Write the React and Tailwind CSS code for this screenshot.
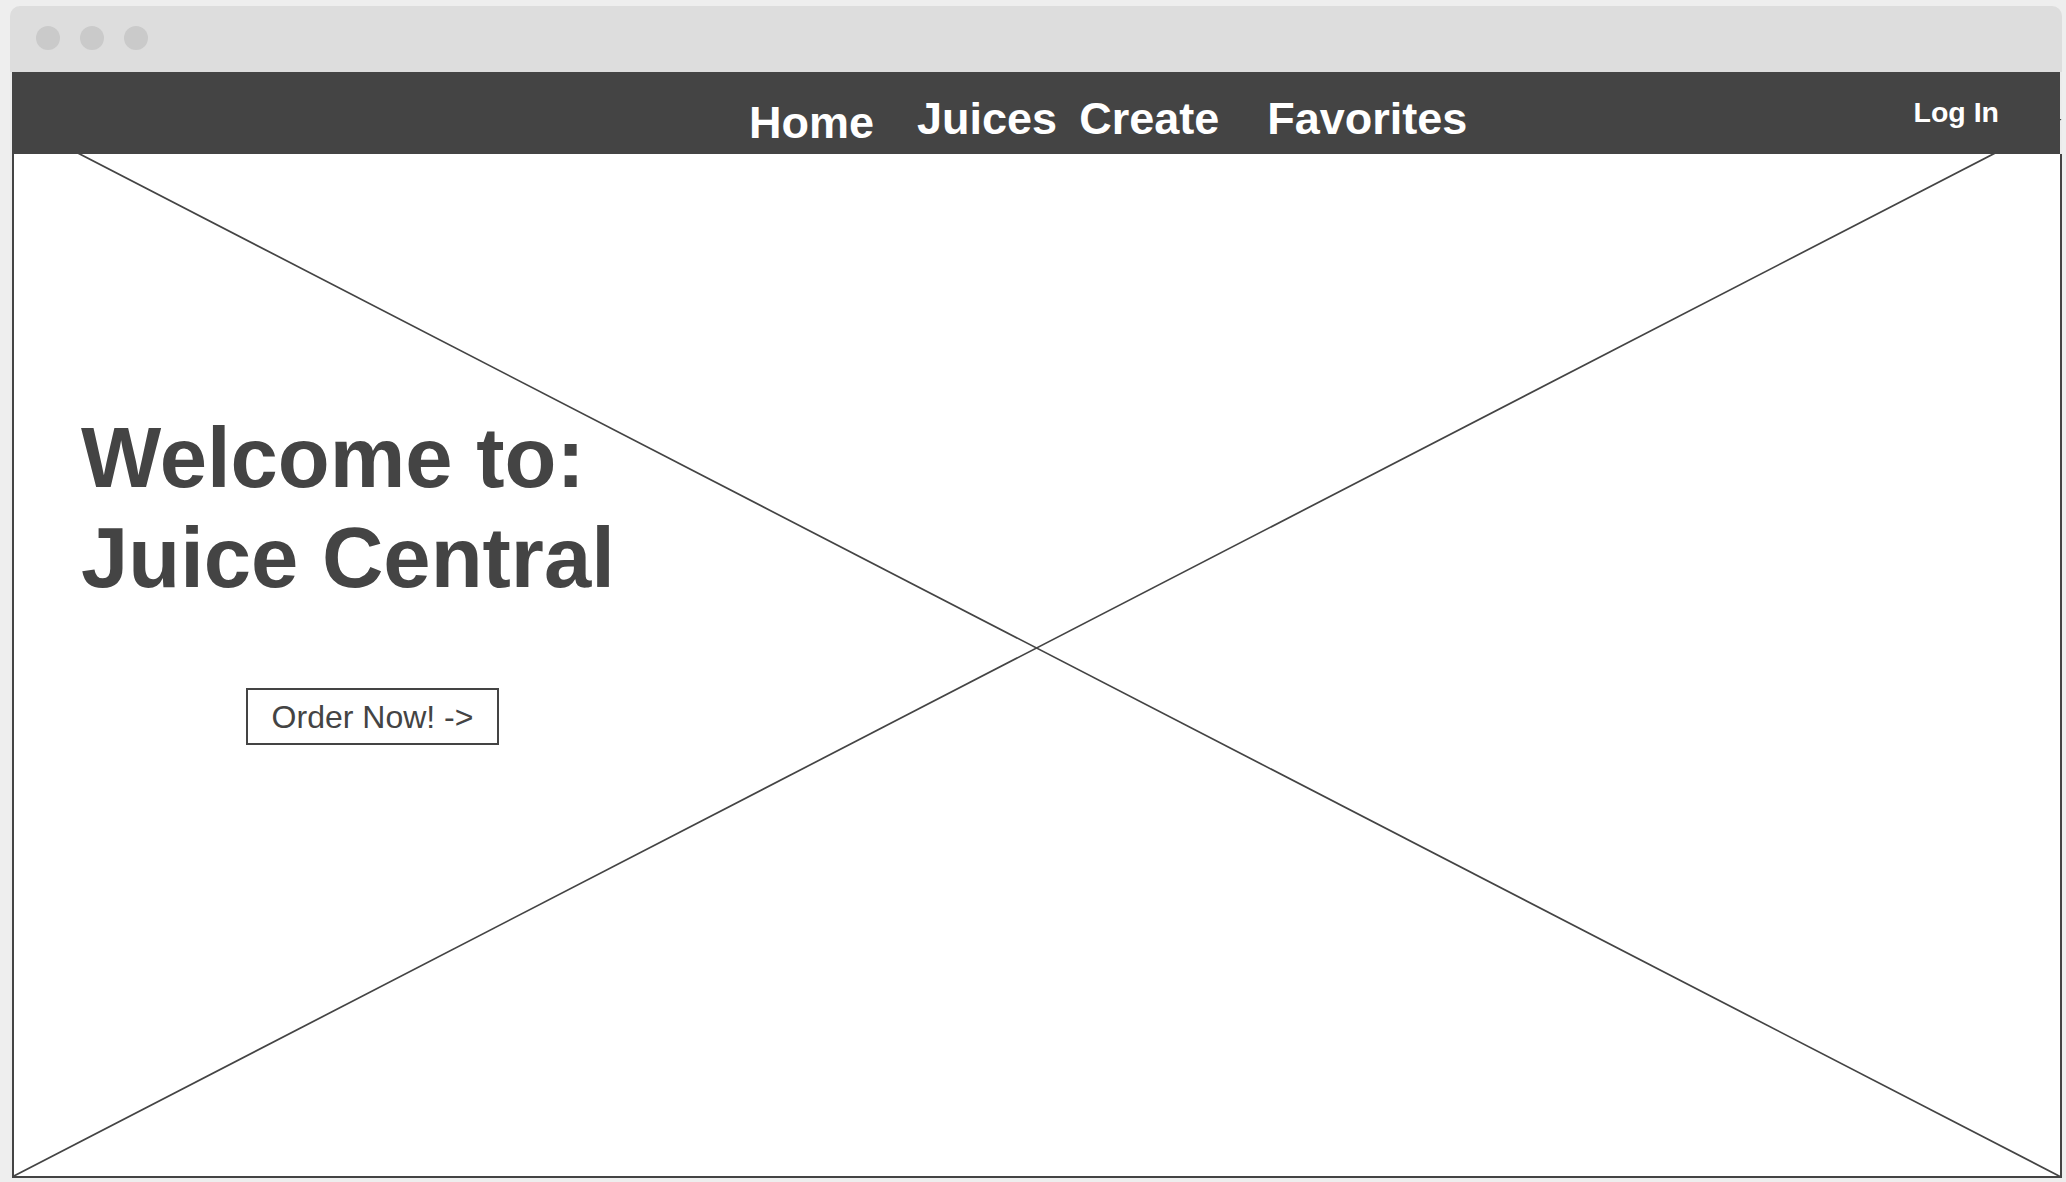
import React from "react";

const navItems = [
  { label: "Home", className: "ml-[737px] mt-[28px]" },
  { label: "Juices", className: "ml-[43px] mt-[24px]" },
  { label: "Create", className: "ml-[22px] mt-[24px]" },
  { label: "Favorites", className: "ml-[48px] mt-[24px]" },
];

const App = () => {
  return (
    <div className="w-[2066px] h-[1182px] overflow-hidden bg-[#eeeeee] pt-[6px] pl-[10px] font-['Liberation_Sans',Arial,sans-serif]">
      <div className="w-[2052px] rounded-t-[10px] bg-[#ebebeb]">
        {/* Browser title bar */}
        <div className="h-[66px] rounded-t-[10px] bg-[#dddddd] flex items-start pt-[20px] pl-[26px] gap-[20px]">
          <span className="w-[24px] h-[24px] rounded-full bg-[#cacaca]" />
          <span className="w-[24px] h-[24px] rounded-full bg-[#cacaca]" />
          <span className="w-[24px] h-[24px] rounded-full bg-[#cacaca]" />
        </div>

        <div className="pl-[2px]">
          {/* Nav */}
          <nav className="relative z-10 w-[2048px] h-[82px] bg-[#444444] flex items-start text-white font-bold">
            {navItems.map((item) => (
              <span key={item.label} className={`text-[45px] leading-none ${item.className}`}>
                {item.label}
              </span>
            ))}
            <span className="ml-auto mr-[61px] mt-[26px] text-[28.5px] leading-none">Log In</span>
          </nav>

          {/* Hero placeholder */}
          <main className="relative w-[2050px] h-[1024px] bg-white border-l-2 border-r-2 border-b-2 border-[#444444]">
            <svg className="absolute left-[-2px] top-[-35px] w-[2050px] h-[1059px] pointer-events-none" viewBox="0 0 2050 1059" preserveAspectRatio="none">
              <line x1="0" y1="0" x2="2049" y2="1058" stroke="#444444" strokeWidth="1.7" />
              <line x1="2049" y1="0" x2="0" y2="1058" stroke="#444444" strokeWidth="1.7" />
            </svg>

            <div className="relative pl-[67px] pt-[254px] text-[#444444]">
              <h1 className="text-[85px] leading-[100px] font-bold">
                Welcome to:
                <br />
                Juice Central
              </h1>
              <button className="mt-[80px] ml-[165px] w-[253px] h-[57px] border-2 border-[#444444] bg-white flex items-center justify-center text-[32px] leading-none">
                Order Now! -&gt;
              </button>
            </div>
          </main>
        </div>
      </div>
    </div>
  );
};

export default App;
